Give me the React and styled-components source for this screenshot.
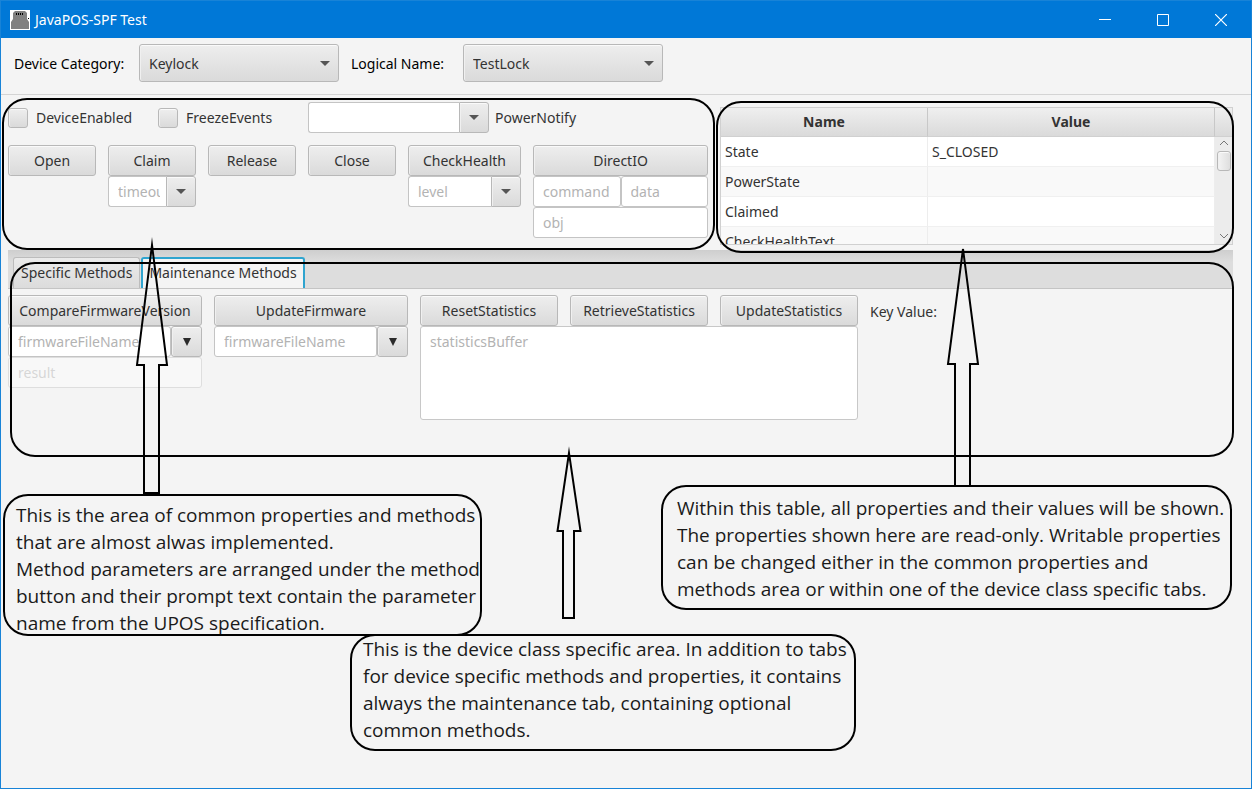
import React from "react";
import styled, { createGlobalStyle, css } from "styled-components";

const GlobalStyle = createGlobalStyle`
  *, *::before, *::after { box-sizing: border-box; }
  body { margin: 0; background: #f4f4f4; }
  body, button, input, select, textarea {
    font-family: "Noto Sans", "Open Sans", sans-serif;
    font-size: 14px;
    line-height: 20px;
    color: #333;
  }
  input::placeholder, textarea::placeholder { color: #b3b3b3; opacity: 1; }
`;

const raised = css`
  background: linear-gradient(#eeeeee, #dadada);
  border: 1px solid #b8b8b8;
  border-radius: 3px;
  box-shadow: inset 0 1px 0 #fafafa, inset 1px 0 0 #f0f0f0;
`;

const Window = styled.div`
  position: relative;
  min-height: 100vh;
  border: 1px solid #1883d7;
  background: #f4f4f4;
`;

const TitleBar = styled.header`
  display: flex;
  align-items: center;
  gap: 5px;
  height: 37px;
  padding: 0 1px 0 9px;
  background: #0078d7;
`;

const Title = styled.h1`
  flex: 1;
  margin: 0;
  font-size: 14px;
  font-weight: 400;
  color: #fff;
`;

const WindowButtons = styled.div`
  display: flex;
`;

const WindowButton = styled.button`
  display: flex;
  align-items: center;
  justify-content: center;
  width: 58px;
  height: 36px;
  padding: 0;
  border: 0;
  background: none;
`;

const Toolbar = styled.div`
  display: grid;
  grid-template-columns: 125px 212px 112px 200px;
  align-items: center;
  padding: 6px 13px 12px;
  border-bottom: 1px solid #d4d4d4;
  color: #000;
`;

const SelectBox = styled.div`
  position: relative;
  width: 200px;
`;

const Select = styled.select`
  ${raised}
  appearance: none;
  display: block;
  width: 100%;
  height: 38px;
  padding: 1px 28px 0 9px;
`;

const ToolbarLabel = styled.label`
  padding-top: 2px;
`;

const SelectArrow = styled.svg`
  position: absolute;
  right: 9px;
  top: 17px;
  pointer-events: none;
`;

const Main = styled.main`
  display: flex;
  align-items: flex-start;
  gap: 12px;
  padding: 7px 18px 5px 7px;
`;

const Common = styled.section`
  flex: none;
  display: flex;
  flex-direction: column;
  gap: 12px;
`;

const OptionRow = styled.div`
  display: flex;
  align-items: center;
`;

const CheckLabel = styled.label`
  display: flex;
  align-items: center;
  gap: 8px;
  width: 150px;
`;

const Check = styled.input`
  ${raised}
  appearance: none;
  width: 20px;
  height: 20px;
  margin: 0;
`;

const PowerLabel = styled.label`
  margin-left: 6px;
`;

const MethodRow = styled.div`
  display: grid;
  grid-template-columns: ${(p) => p.$columns};
  gap: 12px;
  align-items: start;
`;

const Method = styled.div`
  display: flex;
  flex-direction: column;
`;

const FieldRow = styled.div`
  display: flex;
`;

const Button = styled.button`
  ${raised}
  width: 100%;
  height: 31px;
  padding: 0;
  white-space: nowrap;
`;

const Field = styled.input`
  flex: 1;
  width: 100%;
  min-width: 0;
  height: 31px;
  padding: 0 9px;
  border: 1px solid #c4c4c4;
  border-radius: 3px;
  background: #fff;
  flex-basis: ${(p) => (p.$stacked ? "31px" : "0")};
  &:disabled { opacity: 0.45; }
`;

const ComboBox = styled.div`
  display: flex;
  width: ${(p) => (p.$wide ? "181px" : "100%")};
`;

const ComboField = styled(Field)`
  padding-right: 6px;
  border-right: 0;
  border-radius: 3px 0 0 3px;
`;

const ArrowButton = styled.button`
  ${raised}
  display: flex;
  align-items: center;
  justify-content: center;
  flex: none;
  width: ${(p) => (p.$detached ? "31px" : "30px")};
  height: 31px;
  padding: 0;
  border-radius: ${(p) => (p.$detached ? "3px" : "0 3px 3px 0")};
`;

const TableBox = styled.section`
  flex: 1;
  display: flex;
  min-width: 0;
  height: 138px;
  margin-top: 5px;
  border: 1px solid #d0d0d0;
  overflow: hidden;
`;

const Table = styled.table`
  flex: 1;
  width: 100%;
  table-layout: fixed;
  border-collapse: separate;
  border-spacing: 0;
`;

const TableArea = styled.div`
  flex: 1;
  min-width: 0;
  overflow: hidden;
`;

const HeadCell = styled.th`
  width: ${(p) => (p.$name ? "207px" : "auto")};
  height: 29px;
  padding: 0;
  font-weight: 700;
  background: linear-gradient(#efefef, #dadada);
  border-right: 1px solid #c8c8c8;
  border-bottom: 1px solid #d0d0d0;
`;

const Row = styled.tr`
  background: ${(p) => (p.$odd ? "#f9f9f9" : "#fff")};
`;

const Cell = styled.td`
  height: 30px;
  padding: 0 4px;
  border-right: 1px solid #ededed;
  border-bottom: 1px solid #f0f0f0;
`;

const ScrollColumn = styled.div`
  display: flex;
  flex-direction: column;
  align-items: center;
  width: 17px;
  background: #ececec;
`;

const ScrollCorner = styled.div`
  width: 100%;
  height: 29px;
  background: linear-gradient(#efefef, #dadada);
  border-bottom: 1px solid #d0d0d0;
`;

const ScrollThumb = styled.div`
  ${raised}
  width: 14px;
  height: 20px;
  margin-bottom: auto;
  background: linear-gradient(90deg, #f4f4f4, #dedede);
`;

const ScrollEnd = styled.svg`
  display: block;
  margin: 3px 0 5px;
`;

const TabBar = styled.div`
  display: flex;
  align-items: flex-end;
  gap: 1px;
  height: 39px;
  margin: 0 18px 0 7px;
  padding-left: 5px;
  background: linear-gradient(#cecece, #dddddd 12px);
  border-bottom: 1px solid #c4c4c4;
`;

const Tab = styled.button`
  height: 31px;
  padding: ${(p) => (p.$active ? "0 6px 1px" : "0 7px")};
  border: solid ${(p) => (p.$active ? "#2fa4cf" : "#bcbcbc")};
  border-width: ${(p) => (p.$active ? "2px 2px 0" : "1px 1px 0")};
  border-radius: 3px 3px 0 0;
  background: ${(p) => (p.$active ? "#f4f4f4" : "linear-gradient(#ebebeb, #dcdcdc)")};
  white-space: nowrap;
`;

const TabPanel = styled.section`
  display: flex;
  align-items: flex-start;
  gap: 12px;
  padding: 6px 18px 36px 7px;
`;

const Statistics = styled.div`
  width: 438px;
`;

const Buffer = styled.textarea`
  display: block;
  width: 100%;
  height: 94px;
  padding: 5px 9px;
  border: 1px solid #c8c8c8;
  border-radius: 3px;
  background: #fff;
  resize: none;
`;

const KeyValue = styled.span`
  line-height: 34px;
`;

const Outline = styled.div`
  position: absolute;
  left: ${(p) => p.$left}px;
  right: ${(p) => (p.$right === undefined ? "auto" : `${p.$right}px`)};
  top: ${(p) => p.$top}px;
  width: ${(p) => (p.$width ? `${p.$width}px` : "auto")};
  height: ${(p) => p.$height}px;
  border: 2px solid #000;
  border-radius: 25px;
  pointer-events: none;
`;

const Callout = styled.p`
  position: absolute;
  left: ${(p) => p.$left}px;
  top: ${(p) => p.$top}px;
  width: ${(p) => p.$width}px;
  height: ${(p) => p.$height}px;
  margin: 0;
  padding: ${(p) => p.$padding};
  border: 2px solid #000;
  border-radius: 25px;
  font-family: "Open Sans", "Noto Sans", sans-serif;
  font-size: 19px;
  line-height: 27px;
  color: #1a1a1a;
  white-space: nowrap;
`;

const Arrow = styled.svg`
  position: absolute;
  left: ${(p) => p.$left}px;
  top: ${(p) => p.$top}px;
  overflow: visible;
  fill: none;
  stroke: #000;
  stroke-width: 2;
  stroke-miterlimit: 30;
  pointer-events: none;
`;

const SmallArrow = () => (
  <svg width="10" height="5" aria-hidden="true">
    <path d="M0 0H10L5 5Z" fill="#555" />
  </svg>
);

const TallArrow = () => (
  <svg width="8" height="8" aria-hidden="true">
    <path d="M0 0H8L4 8Z" fill="#2b2b2b" />
  </svg>
);

const Picker = ({ id, value }) => (
  <SelectBox>
    <Select id={id} defaultValue={value}>
      <option>{value}</option>
    </Select>
    <SelectArrow width="10" height="5" aria-hidden="true">
      <path d="M0 0H10L5 5Z" fill="#555" />
    </SelectArrow>
  </SelectBox>
);

const Combo = ({ id, name, placeholder, wide }) => (
  <ComboBox $wide={wide}>
    <ComboField id={id} aria-label={name} placeholder={placeholder} />
    <ArrowButton aria-label={`Show ${name} choices`}>
      <SmallArrow />
    </ArrowButton>
  </ComboBox>
);

const FilePicker = ({ name }) => (
  <FieldRow>
    <Field aria-label={name} placeholder="firmwareFileName" />
    <ArrowButton $detached aria-label={`Browse for ${name}`}>
      <TallArrow />
    </ArrowButton>
  </FieldRow>
);

const rows = [
  ["State", "S_CLOSED"],
  ["PowerState", ""],
  ["Claimed", ""],
  ["CheckHealthText", ""],
];

export default function App() {
  return (
    <>
      <GlobalStyle />
      <Window>
        <TitleBar>
          <svg width="20" height="20" aria-hidden="true">
            <path d="M0 0H20V20H0Z" fill="#fff" />
            <path d="M3 3L5 1H15L17 3V9L19 12V19H1V12L3 9Z" fill="#808080" />
            <path d="M6 3H7V5H6ZM8 3H9V5H8ZM10 3H11V5H10ZM12 3H13V5H12ZM18 8H19V9H18Z" fill="#000" />
          </svg>
          <Title>JavaPOS-SPF Test</Title>
          <WindowButtons>
            <WindowButton aria-label="Minimize">
              <svg width="12" height="12"><path d="M0 5.5H12" stroke="#fff" /></svg>
            </WindowButton>
            <WindowButton aria-label="Maximize">
              <svg width="12" height="12"><path d="M.5 .5H11.5V11.5H.5Z" stroke="#fff" fill="none" /></svg>
            </WindowButton>
            <WindowButton aria-label="Close window">
              <svg width="12" height="12"><path d="M0 0L12 12M12 0L0 12" stroke="#fff" strokeWidth="1.2" /></svg>
            </WindowButton>
          </WindowButtons>
        </TitleBar>

        <Toolbar>
          <ToolbarLabel htmlFor="category">Device Category:</ToolbarLabel>
          <Picker id="category" value="Keylock" />
          <ToolbarLabel htmlFor="logical">Logical Name:</ToolbarLabel>
          <Picker id="logical" value="TestLock" />
        </Toolbar>

        <Main>
          <Common>
            <OptionRow>
              <CheckLabel><Check type="checkbox" />DeviceEnabled</CheckLabel>
              <CheckLabel><Check type="checkbox" />FreezeEvents</CheckLabel>
              <Combo id="power" name="PowerNotify" wide />
              <PowerLabel htmlFor="power">PowerNotify</PowerLabel>
            </OptionRow>
            <MethodRow $columns="88px 88px 88px 88px 113px 175px">
              <Button>Open</Button>
              <Method>
                <Button>Claim</Button>
                <Combo name="timeout" placeholder="timeout" />
              </Method>
              <Button>Release</Button>
              <Button>Close</Button>
              <Method>
                <Button>CheckHealth</Button>
                <Combo name="level" placeholder="level" />
              </Method>
              <Method>
                <Button>DirectIO</Button>
                <FieldRow>
                  <Field aria-label="command" placeholder="command" />
                  <Field aria-label="data" placeholder="data" />
                </FieldRow>
                <Field $stacked aria-label="obj" placeholder="obj" />
              </Method>
            </MethodRow>
          </Common>

          <TableBox>
            <TableArea>
              <Table>
                <thead>
                  <tr>
                    <HeadCell $name>Name</HeadCell>
                    <HeadCell>Value</HeadCell>
                  </tr>
                </thead>
                <tbody>
                  {rows.map(([name, value], i) => (
                    <Row key={name} $odd={i % 2 === 1}>
                      <Cell>{name}</Cell>
                      <Cell>{value}</Cell>
                    </Row>
                  ))}
                </tbody>
              </Table>
            </TableArea>
            <ScrollColumn>
              <ScrollCorner />
              <ScrollEnd width="10" height="6"><path d="M1 5L5 1L9 5" stroke="#777" fill="none" /></ScrollEnd>
              <ScrollThumb />
              <ScrollEnd width="10" height="6"><path d="M1 1L5 5L9 1" stroke="#777" fill="none" /></ScrollEnd>
            </ScrollColumn>
          </TableBox>
        </Main>

        <TabBar role="tablist">
          <Tab role="tab" aria-selected="false">Specific Methods</Tab>
          <Tab role="tab" aria-selected="true" $active>Maintenance Methods</Tab>
        </TabBar>
        <TabPanel role="tabpanel">
          <MethodRow $columns="194px 194px">
            <Method>
              <Button>CompareFirmwareVersion</Button>
              <FilePicker name="firmware file to compare" />
              <Field $stacked disabled aria-label="result" placeholder="result" />
            </Method>
            <Method>
              <Button>UpdateFirmware</Button>
              <FilePicker name="firmware file for update" />
            </Method>
          </MethodRow>
          <Statistics>
            <MethodRow $columns="repeat(3, 1fr)">
              <Button>ResetStatistics</Button>
              <Button>RetrieveStatistics</Button>
              <Button>UpdateStatistics</Button>
            </MethodRow>
            <Buffer aria-label="statisticsBuffer" placeholder="statisticsBuffer" />
          </Statistics>
          <KeyValue>Key Value:</KeyValue>
        </TabPanel>

        <Outline $left={1} $top={97} $width={713} $height={152} />
        <Outline $left={715} $right={17} $top={100} $height={152} />
        <Outline $left={9} $right={17} $top={261} $height={195} />

        <Arrow $left={135} $top={237} width="32" height="256" aria-hidden="true">
          <path d="M16 7L1 127H8V255H23V127H31Z" />
        </Arrow>
        <Arrow $left={555} $top={446} width="26" height="172" aria-hidden="true">
          <path d="M13 6L1.500 84H7V171H18V84H24.500Z" />
        </Arrow>
        <Arrow $left={946} $top={243} width="32" height="242" aria-hidden="true">
          <path d="M16 5L1 120H8V242M23 242V120H31L16 5" />
        </Arrow>

        <Callout $left={2} $top={493} $width={479} $height={142} $padding="6px 11px">
          This is the area of common properties and methods<br />
          that are almost alwas implemented.<br />
          Method parameters are arranged under the method<br />
          button and their prompt text contain the parameter<br />
          name from the UPOS specification.
        </Callout>
        <Callout $left={349} $top={633} $width={506} $height={117} $padding="0 11px">
          This is the device class specific area. In addition to tabs<br />
          for device specific methods and properties, it contains<br />
          always the maintenance tab, containing optional<br />
          common methods.
        </Callout>
        <Callout $left={660} $top={484} $width={571} $height={125} $padding="8px 14px">
          Within this table, all properties and their values will be shown.<br />
          The properties shown here are read-only. Writable properties<br />
          can be changed either in the common properties and<br />
          methods area or within one of the device class specific tabs.
        </Callout>
      </Window>
    </>
  );
}
